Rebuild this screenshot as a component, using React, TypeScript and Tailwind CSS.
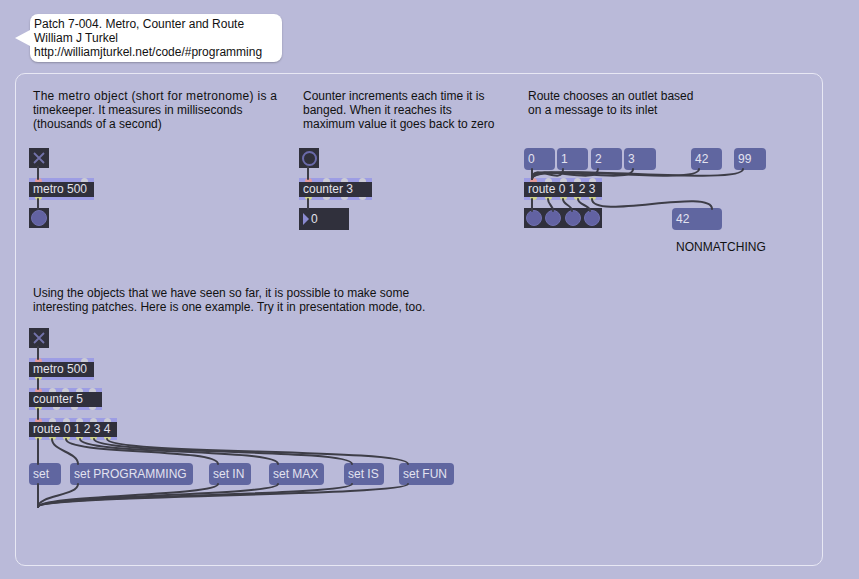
import React from 'react';

const PINK = 'bg-[#e39b9b]';
const YEL = 'bg-[#d3d78c]';
const GRAY = 'bg-[#cbcbd5]';

type ObjProps = { pos: string; label: React.ReactNode; ins: string[]; outs: string[] };

function Obj({ pos, label, ins, outs }: ObjProps) {
  return (
    <div className={`absolute flex h-[22px] flex-col ${pos}`}>
      <div className="flex h-[4px] justify-between bg-[#9d9de4] px-[6px]">
        {ins.map((c, i) => (
          <span key={i} className={`h-[4px] w-[7px] rounded-t-full ${c}`} />
        ))}
      </div>
      <div className="h-[15px] whitespace-nowrap bg-[#30303c] px-[4px] text-[12px] leading-[15px] text-[#e2e2ec]">
        {label}
      </div>
      <div className="flex h-[3px] justify-between bg-[#9d9de4] px-[6px]">
        {outs.map((c, i) => (
          <span key={i} className={`h-[3px] w-[7px] rounded-b-full ${c}`} />
        ))}
      </div>
    </div>
  );
}

function Msg({ pos, children }: { pos: string; children: React.ReactNode }) {
  return (
    <div
      className={`absolute flex h-[22px] items-center whitespace-nowrap rounded-[4px] bg-[#6066a0] px-[4px] text-[12px] text-[#e2e2f0] ${pos}`}
    >
      {children}
    </div>
  );
}

function Toggle({ pos }: { pos: string }) {
  return (
    <div className={`absolute h-[20px] w-[20px] bg-[#30303c] ${pos}`}>
      <svg width="20" height="20" viewBox="0 0 20 20">
        <path d="M5 5 L15 15 M15 5 L5 15" stroke="#7272aa" strokeWidth="1.8" />
      </svg>
    </div>
  );
}

function Bang({ pos, outline }: { pos: string; outline?: boolean }) {
  return (
    <div className={`absolute flex h-[20px] w-[20px] items-center justify-center bg-[#30303c] ${pos}`}>
      {outline ? (
        <span className="h-[15px] w-[15px] rounded-full border-2 border-[#6a6aaa]" />
      ) : (
        <span className="h-[16px] w-[16px] rounded-full border border-[#7070b0] bg-[#6262a2]" />
      )}
    </div>
  );
}

function c(x1: number, y1: number, x2: number, y2: number, k: number) {
  return `M${x1},${y1} C${x1},${y1 + k} ${x2},${y2 - k} ${x2},${y2}`;
}

const cords: string[] = [
  'M38,167 L38,179',
  'M38,199 L38,209',
  'M308,167 L308,179',
  'M308,199 L308,209',
  'M532,169 L532,179',
  c(563, 169, 532, 179, 18),
  c(598, 169, 532, 179, 18),
  c(633, 169, 532, 179, 18),
  c(699, 169, 532, 179, 18),
  c(743, 169, 532, 179, 18),
  'M532,199 L532,211',
  c(548, 199, 553, 211, 6),
  c(563, 199, 572, 211, 6),
  c(578, 199, 590, 211, 6),
  c(592, 199, 712, 209, 22),
  'M38,347 L38,359',
  'M38,379 L38,389',
  'M38,409 L38,419',
  'M38,439 L38,464',
  'M38,484 L38,507',
  c(52, 439, 78, 464, 12),
  c(66, 439, 218, 464, 16),
  c(80, 439, 278, 464, 16),
  c(94, 439, 352, 464, 16),
  c(107, 439, 408, 464, 16),
  c(78, 484, 38, 507, 12),
  c(218, 484, 38, 507, 12),
  c(278, 484, 38, 507, 12),
  c(352, 484, 38, 507, 12),
  c(408, 484, 38, 507, 12),
];

export default function App() {
  return (
    <div className="relative h-[579px] w-[859px] overflow-hidden bg-[#babad9] font-['Liberation_Sans',Arial,sans-serif] text-[12px] leading-[14px] text-[#111]">
      {/* title bubble */}
      <div className="absolute left-[30px] top-[14px] h-[48px] w-[252px] rounded-[8px] bg-white px-[4px] pt-[3px] shadow-[0_1px_2px_rgba(0,0,0,0.25)]">
        <span className="absolute left-[-15px] top-[16px] h-0 w-0 border-y-[8px] border-r-[15px] border-y-transparent border-r-white" />
        <div className="whitespace-nowrap">Patch 7-004. Metro, Counter and Route</div>
        <div className="whitespace-nowrap">William J Turkel</div>
        <div className="whitespace-nowrap">http://williamjturkel.net/code/#programming</div>
      </div>

      {/* panel */}
      <div className="absolute left-[15px] top-[73px] h-[493px] w-[808px] rounded-[10px] border-[1.5px] border-[#e8e8f4]" />

      {/* comments */}
      <div className="absolute left-[33px] top-[89px] whitespace-nowrap">
        <div className="tracking-[0.3px]">The metro object (short for metronome) is a</div>
        <div>timekeeper. It measures in milliseconds</div>
        <div>(thousands of a second)</div>
      </div>
      <div className="absolute left-[303px] top-[89px] whitespace-nowrap">
        <div>Counter increments each time it is</div>
        <div>banged. When it reaches its</div>
        <div>maximum value it goes back to zero</div>
      </div>
      <div className="absolute left-[528px] top-[89px] whitespace-nowrap">
        <div>Route chooses an outlet based</div>
        <div>on a message to its inlet</div>
      </div>
      <div className="absolute left-[676px] top-[240px] whitespace-nowrap">NONMATCHING</div>
      <div className="absolute left-[33px] top-[286px] whitespace-nowrap">
        <div>Using the objects that we have seen so far, it is possible to make some</div>
        <div>interesting patches. Here is one example. Try it in presentation mode, too.</div>
      </div>

      {/* metro section */}
      <Toggle pos="left-[29px] top-[148px]" />
      <Obj pos="left-[29px] top-[178px] w-[65px]" label="metro 500" ins={[PINK, GRAY]} outs={[YEL]} />
      <Bang pos="left-[29px] top-[208px]" />

      {/* counter section */}
      <Bang pos="left-[299px] top-[148px]" outline />
      <Obj
        pos="left-[299px] top-[178px] w-[73px]"
        label="counter 3"
        ins={[PINK, GRAY, GRAY, GRAY]}
        outs={[YEL, GRAY, GRAY, GRAY]}
      />
      <div className="absolute left-[299px] top-[208px] flex h-[22px] w-[50px] items-center bg-[#30303c] pl-[4px] text-[12px] text-[#e2e2ec]">
        <span className="mr-[2px] h-0 w-0 border-y-[6px] border-l-[6px] border-y-transparent border-l-[#8a8ad0]" />
        0
      </div>

      {/* route section */}
      <Msg pos="left-[524px] top-[148px] w-[31px]">0</Msg>
      <Msg pos="left-[557px] top-[148px] w-[31px]">1</Msg>
      <Msg pos="left-[591px] top-[148px] w-[31px]">2</Msg>
      <Msg pos="left-[624px] top-[148px] w-[32px]">3</Msg>
      <Msg pos="left-[691px] top-[148px] w-[31px]">42</Msg>
      <Msg pos="left-[734px] top-[148px] w-[32px]">99</Msg>
      <Obj
        pos="left-[524px] top-[178px] w-[78px]"
        label="route 0 1 2 3"
        ins={[PINK, GRAY, GRAY, GRAY, GRAY]}
        outs={[YEL, YEL, YEL, YEL, YEL]}
      />
      <div className="absolute left-[524px] top-[208px] flex h-[20px] w-[78px] items-center justify-between bg-[#30303c] px-[2px]">
        {[0, 1, 2, 3].map((i) => (
          <span key={i} className="h-[16px] w-[16px] rounded-full border border-[#7070b0] bg-[#6262a2]" />
        ))}
      </div>
      <Msg pos="left-[672px] top-[208px] w-[50px]">42</Msg>

      {/* bottom example */}
      <Toggle pos="left-[29px] top-[328px]" />
      <Obj pos="left-[29px] top-[358px] w-[65px]" label="metro 500" ins={[PINK, GRAY]} outs={[YEL]} />
      <Obj
        pos="left-[29px] top-[388px] w-[73px]"
        label="counter 5"
        ins={[PINK, GRAY, GRAY, GRAY, GRAY]}
        outs={[YEL, GRAY, GRAY, GRAY]}
      />
      <Obj
        pos="left-[29px] top-[418px] w-[88px]"
        label="route 0 1 2 3 4"
        ins={[PINK, GRAY, GRAY, GRAY, GRAY, GRAY]}
        outs={[YEL, YEL, YEL, YEL, YEL, YEL]}
      />
      <Msg pos="left-[29px] top-[463px] w-[32px]">set</Msg>
      <Msg pos="left-[70px] top-[463px] w-[123px]">set PROGRAMMING</Msg>
      <Msg pos="left-[209px] top-[463px] w-[42px]">set IN</Msg>
      <Msg pos="left-[269px] top-[463px] w-[55px]">set MAX</Msg>
      <Msg pos="left-[344px] top-[463px] w-[40px]">set IS</Msg>
      <Msg pos="left-[399px] top-[463px] w-[55px]">set FUN</Msg>

      {/* patch cords */}
      <svg className="pointer-events-none absolute left-0 top-0" width="859" height="579" viewBox="0 0 859 579">
        {cords.map((d, i) => (
          <path key={i} d={d} fill="none" stroke="#3d3d47" strokeWidth="2" strokeLinecap="round" />
        ))}
      </svg>
    </div>
  );
}
